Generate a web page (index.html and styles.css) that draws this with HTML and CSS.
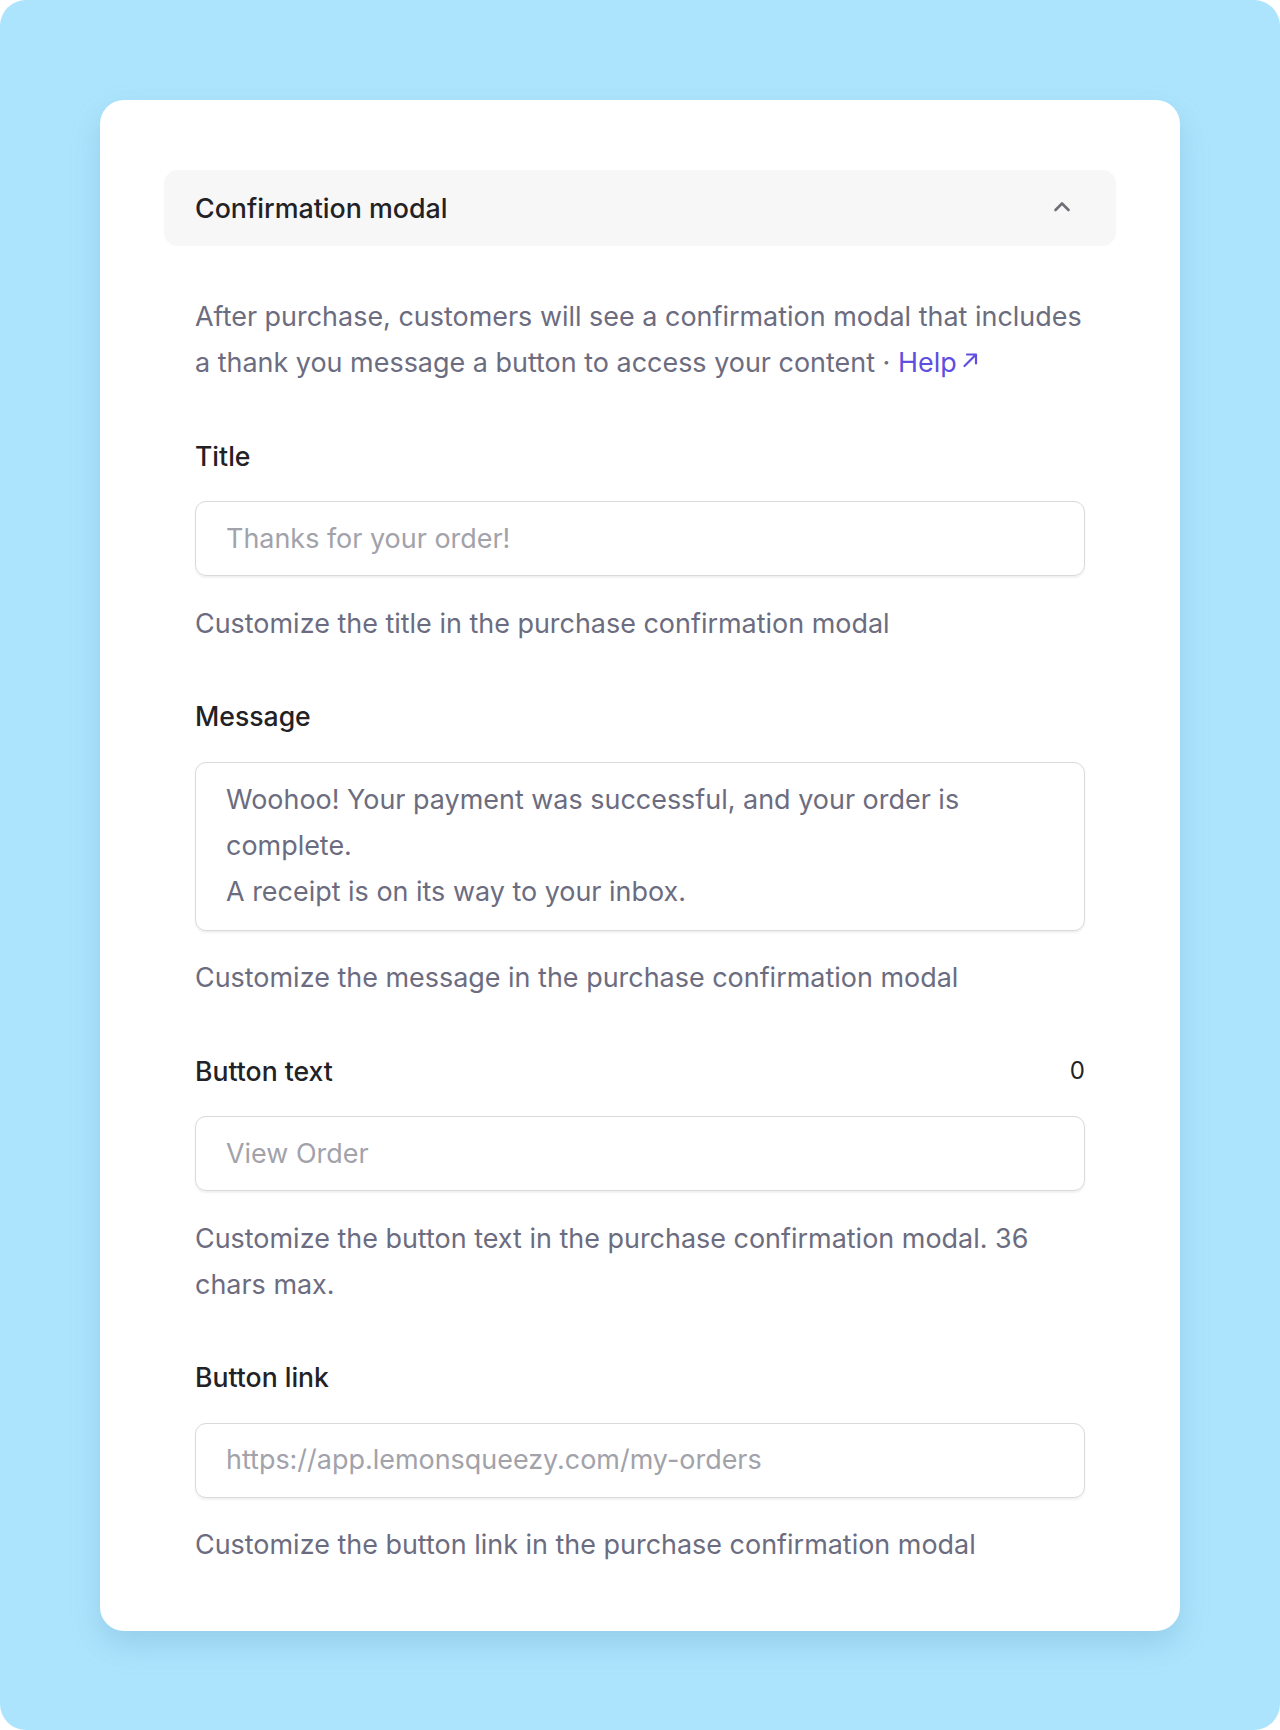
FILE: index.html
```html
<!DOCTYPE html>
<html lang="en">
<head>
<meta charset="utf-8">
<title>Confirmation modal</title>
<link rel="stylesheet" href="styles.css">
</head>
<body>
<div class="frame">
  <div class="card">
    <div class="accordion-head">
      <span class="accordion-title">Confirmation modal</span>
      <svg class="chevron" width="18" height="12" viewBox="0 0 18 12" aria-hidden="true">
        <path d="M2.5 10 L9 3.5 L15.5 10" fill="none" stroke="#6f6f78" stroke-width="2.6" stroke-linecap="round" stroke-linejoin="round"/>
      </svg>
    </div>
    <div class="content">
      <p class="intro">After purchase, customers will see a confirmation modal that includes a thank you message a button to access your content · <a class="help" href="#"><span>Help</span><svg class="ext" width="18" height="18" viewBox="0 0 18 18" aria-hidden="true"><path d="M3.5 15 L14.5 4 M6 3.5 H15 V12.5" fill="none" stroke="#5e4fe0" stroke-width="2.2" stroke-linecap="round" stroke-linejoin="round"/></svg></a></p>

      <div class="field">
        <div class="label-row"><label class="label">Title</label></div>
        <div class="input placeholder">Thanks for your order!</div>
        <p class="hint">Customize the title in the purchase confirmation modal</p>
      </div>

      <div class="field">
        <div class="label-row"><label class="label">Message</label></div>
        <div class="input textarea">Woohoo! Your payment was successful, and your order is complete.<br>A receipt is on its way to your inbox.</div>
        <p class="hint">Customize the message in the purchase confirmation modal</p>
      </div>

      <div class="field">
        <div class="label-row"><label class="label">Button text</label><span class="count">0</span></div>
        <div class="input placeholder">View Order</div>
        <p class="hint">Customize the button text in the purchase confirmation modal. 36 chars max.</p>
      </div>

      <div class="field">
        <div class="label-row"><label class="label">Button link</label></div>
        <div class="input placeholder">https://app.lemonsqueezy.com/my-orders</div>
        <p class="hint">Customize the button link in the purchase confirmation modal</p>
      </div>
    </div>
  </div>
</div>
</body>
</html>
```

FILE: styles.css
```css
* { box-sizing: border-box; }
html, body {
  margin: 0;
  padding: 0;
  background: #ffffff;
}
body {
  font-family: Inter, "Noto Sans", "Liberation Sans", sans-serif;
  width: 1280px;
  height: 1730px;
}
.frame {
  width: 1280px;
  height: 1730px;
  background: #ade4fd;
  border-radius: 26px;
  padding: 100px 100px;
}
.card {
  background: #ffffff;
  border-radius: 24px;
  padding: 70px 64px 63px;
  box-shadow: 0 14px 30px rgba(70, 130, 170, 0.22);
}
.accordion-head {
  height: 76px;
  background: #f7f7f8;
  border-radius: 14px;
  display: flex;
  align-items: center;
  justify-content: space-between;
  padding: 0 45px 0 31px;
}
.accordion-title {
  font-size: 26.8px;
  font-weight: 500;
  color: #222226;
}
.chevron { display: block; margin-top: -4px; }
.content {
  padding: 48px 31px 0;
  display: flex;
  flex-direction: column;
  gap: 50px;
}
.intro {
  margin: 0;
  font-size: 26.95px;
  line-height: 46px;
  color: #6c6c80;
}
.help {
  color: #5e4fe0;
  text-decoration: none;
  white-space: nowrap;
}
.ext {
  display: inline-block;
  vertical-align: 3px;
  margin-left: 4px;
}
.field {
  display: flex;
  flex-direction: column;
}
.label-row {
  display: flex;
  justify-content: space-between;
  align-items: center;
  height: 39px;
  margin-bottom: 26px;
}
.label {
  font-size: 26.6px;
  font-weight: 500;
  color: #222226;
}
.count {
  font-size: 24px;
  color: #222226;
}
.input {
  border: 1.5px solid #d9d9de;
  border-radius: 11px;
  padding: 13.5px 28px 13.5px 30px;
  font-size: 26.95px;
  line-height: 46px;
  color: #6c6c80;
  box-shadow: 0 1.5px 2px rgba(0, 0, 0, 0.06);
}
.placeholder { color: #a2a2aa; }
.textarea { padding-top: 14.5px; padding-bottom: 14.5px; }
.hint {
  margin: 24.5px 0 0;
  font-size: 26.95px;
  line-height: 46px;
  color: #6c6c80;
}
```
